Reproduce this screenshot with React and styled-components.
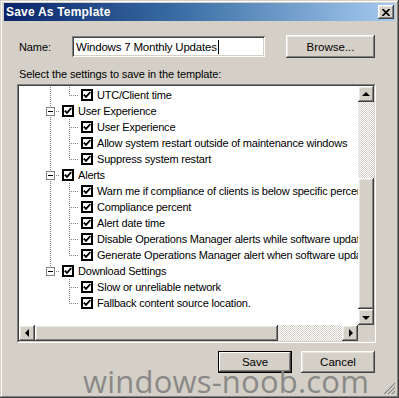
import React from "react";
import styled, { createGlobalStyle, css } from "styled-components";

const Global = createGlobalStyle`
  html, body { margin: 0; padding: 0; background: #d4d0c8; }
  body { font-family: "Liberation Sans", Arial, sans-serif; }
  * { box-sizing: border-box; }
`;

const raised = css`
  background: #d4d0c8;
  box-shadow: inset -1px -1px #404040, inset 1px 1px #ffffff,
    inset -2px -2px #808080, inset 2px 2px #e8e6e1;
`;

const Window = styled.div`
  position: relative;
  width: 399px;
  height: 398px;
  background: #d4d0c8;
  padding: 3px 4px 4px 4px;
  display: flex;
  flex-direction: column;
  box-shadow: inset -1px -1px #404040, inset 1px 1px #d4d0c8,
    inset -2px -2px #808080, inset 2px 2px #ffffff;
  overflow: hidden;
`;

const TitleBar = styled.div`
  height: 18px;
  display: flex;
  align-items: center;
  padding: 0 1px 0 2px;
  background: linear-gradient(to right, #0a246a 0%, #3a6ea5 45%, #a6caf0 100%);
`;

const Title = styled.span`
  flex: 1;
  color: #fff;
  font-weight: bold;
  font-size: 12px;
  letter-spacing: 0.2px;
`;

const CloseButton = styled.div`
  ${raised};
  width: 16px;
  height: 14px;
  display: flex;
  align-items: center;
  justify-content: center;
`;

const Body = styled.div`
  flex: 1;
  display: flex;
  flex-direction: column;
  padding: 14px 19px 0 13px;
`;

const NameRow = styled.div`
  display: flex;
  align-items: center;
  height: 23px;
`;

const Label = styled.span`
  font-size: 11px;
  color: #000;
  letter-spacing: -0.1px;
  padding-left: 2px;
  width: ${(p) => p.$w || "auto"};
  flex: none;
`;

const Input = styled.div`
  width: 193px;
  height: 21px;
  background: #fff;
  box-shadow: inset 1px 1px #808080, inset -1px -1px #ffffff,
    inset 2px 2px #404040, inset -2px -2px #d4d0c8;
  display: flex;
  align-items: center;
  padding-left: 4px;
  font-size: 11.5px;
  letter-spacing: -0.2px;
  color: #000;
  white-space: nowrap;
`;

const Caret = styled.span`
  display: inline-block;
  width: 1px;
  height: 14px;
  background: #000;
  margin-left: 1px;
`;

const Button = styled.div`
  ${raised};
  width: ${(p) => p.$w}px;
  height: ${(p) => p.$h}px;
  display: flex;
  align-items: center;
  justify-content: center;
  font-size: 11.5px;
  color: #000;
  margin-left: ${(p) => (p.$auto ? "auto" : "0")};
  margin-right: 1px;
  ${(p) =>
    p.$default &&
    css`
      box-shadow: inset 0 0 0 1px #000, inset -2px -2px #404040,
        inset 2px 2px #ffffff, inset -3px -3px #808080;
    `}
`;

const Caption = styled.div`
  font-size: 11px;
  letter-spacing: -0.1px;
  color: #000;
  padding-left: 2px;
  margin-top: 10px;
  line-height: 13px;
`;

const TreeBox = styled.div`
  margin-top: 3px;
  width: 359px;
  height: 259px;
  border: 1px solid;
  border-color: #808080 #ffffff #ffffff #808080;
`;

const TreeInner = styled.div`
  width: 100%;
  height: 100%;
  border: 1px solid;
  border-color: #404040 #d4d0c8 #d4d0c8 #404040;
  display: grid;
  grid-template-columns: 1fr 16px;
  grid-template-rows: 1fr 16px;
  background: #fff;
`;

const TreeContent = styled.div`
  overflow: hidden;
  padding-top: 1px;
  white-space: nowrap;
`;

const Row = styled.div`
  display: flex;
  align-items: center;
  height: 16px;
  padding-left: 22px;
`;

const dotsV = "repeating-linear-gradient(to bottom, #808080 0 1px, transparent 1px 2px)";
const dotsH = "repeating-linear-gradient(to right, #808080 0 1px, transparent 1px 2px)";

const Guide = styled.span`
  flex: none;
  width: 19px;
  height: 16px;
  display: flex;
  align-items: center;
  background-repeat: no-repeat;
  ${(p) => {
    const imgs = [];
    const sizes = [];
    const pos = [];
    if (p.$v === "full" || p.$v === "top") {
      imgs.push(dotsV);
      sizes.push(p.$v === "full" ? "1px 16px" : "1px 9px");
      pos.push("9px 0");
    }
    if (p.$branch) {
      imgs.push(dotsH);
      sizes.push("10px 1px");
      pos.push("9px 8px");
    }
    if (!imgs.length) return "";
    return css`
      background-image: ${imgs.join(", ")};
      background-size: ${sizes.join(", ")};
      background-position: ${pos.join(", ")};
    `;
  }}
`;

const Expander = styled.span`
  width: 9px;
  height: 9px;
  margin-left: 5px;
  border: 1px solid #808080;
  background: #fff;
  display: flex;
  align-items: center;
  justify-content: center;
  &::after {
    content: "";
    width: 5px;
    height: 1px;
    background: #000;
  }
`;

const Check = styled.span`
  flex: none;
  width: 12px;
  height: 12px;
  margin-left: 2px;
  border: 2px solid #000;
  background: #fff;
  display: flex;
  align-items: center;
  justify-content: center;
`;

const ItemText = styled.span`
  margin-left: 4px;
  font-size: 11px;
  letter-spacing: -0.2px;
  color: #000;
  line-height: 16px;
`;

const VScroll = styled.div`
  display: flex;
  flex-direction: column;
`;

const HScroll = styled.div`
  display: flex;
`;

const Track = styled.div`
  flex: ${(p) => (p.$size ? `0 0 ${p.$size}px` : "1")};
  background: repeating-conic-gradient(#d4d0c8 0 25%, #ffffff 0 50%) 0 0 / 2px 2px;
`;

const Thumb = styled.div`
  ${raised};
  flex: 0 0 ${(p) => p.$size}px;
`;

const ScrollBtn = styled.div`
  ${raised};
  flex: 0 0 16px;
  width: 16px;
  height: 16px;
  display: flex;
  align-items: center;
  justify-content: center;
  &::after {
    content: "";
    width: 0;
    height: 0;
    ${(p) =>
      p.$dir === "up" &&
      css`
        border-left: 4px solid transparent;
        border-right: 4px solid transparent;
        border-bottom: 4px solid #000;
      `}
    ${(p) =>
      p.$dir === "down" &&
      css`
        border-left: 4px solid transparent;
        border-right: 4px solid transparent;
        border-top: 4px solid #000;
        margin-top: 1px;
      `}
    ${(p) =>
      p.$dir === "left" &&
      css`
        border-top: 4px solid transparent;
        border-bottom: 4px solid transparent;
        border-right: 4px solid #000;
      `}
    ${(p) =>
      p.$dir === "right" &&
      css`
        border-top: 4px solid transparent;
        border-bottom: 4px solid transparent;
        border-left: 4px solid #000;
        margin-left: 1px;
      `}
  }
`;

const Corner = styled.div`
  background: #d4d0c8;
`;

const ButtonRow = styled.div`
  display: flex;
  justify-content: flex-end;
  gap: 8px;
  margin-top: 8px;
`;

const Watermark = styled.div`
  position: absolute;
  left: 83px;
  top: 375px;
  font-family: "Open Sans", "Liberation Sans", sans-serif;
  font-size: 31px;
  letter-spacing: 0.2px;
  color: #8a8987;
  line-height: 12px;
  height: 12px;
  white-space: nowrap;
  pointer-events: none;
`;

const Grip = styled.svg`
  position: absolute;
  right: 4px;
  bottom: 4px;
`;

const CheckMark = () => (
  <svg width="8" height="8" viewBox="0 0 8 8">
    <path d="M0.8 3.6 L3 5.9 L7.3 1.2" fill="none" stroke="#000" strokeWidth="1.9" />
  </svg>
);

const Item = ({ guides, text, expander }) => (
  <Row>
    {guides.map((g, i) => (
      <Guide key={i} $v={g.v} $branch={g.b}>
        {expander && i === guides.length - 1 ? <Expander /> : null}
      </Guide>
    ))}
    <Check>
      <CheckMark />
    </Check>
    <ItemText>{text}</ItemText>
  </Row>
);

const rows = [
  { guides: [{ v: "full" }, { v: "top", b: true }], text: "UTC/Client time" },
  { guides: [{ v: "full", b: true }], text: "User Experience", expander: true },
  { guides: [{ v: "full" }, { v: "full", b: true }], text: "User Experience" },
  { guides: [{ v: "full" }, { v: "full", b: true }], text: "Allow system restart outside of maintenance windows" },
  { guides: [{ v: "full" }, { v: "top", b: true }], text: "Suppress system restart" },
  { guides: [{ v: "full", b: true }], text: "Alerts", expander: true },
  { guides: [{ v: "full" }, { v: "full", b: true }], text: "Warn me if compliance of clients is below specific percentage" },
  { guides: [{ v: "full" }, { v: "full", b: true }], text: "Compliance percent" },
  { guides: [{ v: "full" }, { v: "full", b: true }], text: "Alert date time" },
  { guides: [{ v: "full" }, { v: "full", b: true }], text: "Disable Operations Manager alerts while software updates are installing" },
  { guides: [{ v: "full" }, { v: "top", b: true }], text: "Generate Operations Manager alert when software update installation fails" },
  { guides: [{ v: "top", b: true }], text: "Download Settings", expander: true },
  { guides: [{ v: "none" }, { v: "full", b: true }], text: "Slow or unreliable network" },
  { guides: [{ v: "none" }, { v: "top", b: true }], text: "Fallback content source location." },
];

export default function App() {
  return (
    <>
      <Global />
      <Window>
        <TitleBar>
          <Title>Save As Template</Title>
          <CloseButton>
            <svg width="8" height="7" viewBox="0 0 8 7">
              <path d="M0.5 0 L7.5 7 M7.5 0 L0.5 7" stroke="#000" strokeWidth="1.6" />
            </svg>
          </CloseButton>
        </TitleBar>
        <Body>
          <NameRow>
            <Label $w="55px">Name:</Label>
            <Input>
              Windows 7 Monthly Updates
              <Caret />
            </Input>
            <Button $w={89} $h={23} $auto>
              Browse...
            </Button>
          </NameRow>
          <Caption>Select the settings to save in the template:</Caption>
          <TreeBox>
            <TreeInner>
              <TreeContent>
                {rows.map((r, i) => (
                  <Item key={i} {...r} />
                ))}
              </TreeContent>
              <VScroll>
                <ScrollBtn $dir="up" />
                <Track $size={76} />
                <Thumb $size={131} />
                <Track />
                <ScrollBtn $dir="down" />
              </VScroll>
              <HScroll>
                <ScrollBtn $dir="left" />
                <Thumb $size={243} />
                <Track />
                <ScrollBtn $dir="right" />
              </HScroll>
              <Corner />
            </TreeInner>
          </TreeBox>
          <ButtonRow>
            <Button $w={74} $h={22} $default>
              Save
            </Button>
            <Button $w={74} $h={22}>
              Cancel
            </Button>
          </ButtonRow>
        </Body>
        <Watermark>windows-noob.com</Watermark>
        <Grip width="12" height="12" viewBox="0 0 12 12">
          <path d="M11 1 L1 11 M11 5 L5 11 M11 9 L9 11" stroke="#ffffff" strokeWidth="1" />
          <path d="M12 1 L1 12 M12 5 L5 12 M12 9 L9 12" stroke="#808080" strokeWidth="1.2" />
        </Grip>
      </Window>
    </>
  );
}
